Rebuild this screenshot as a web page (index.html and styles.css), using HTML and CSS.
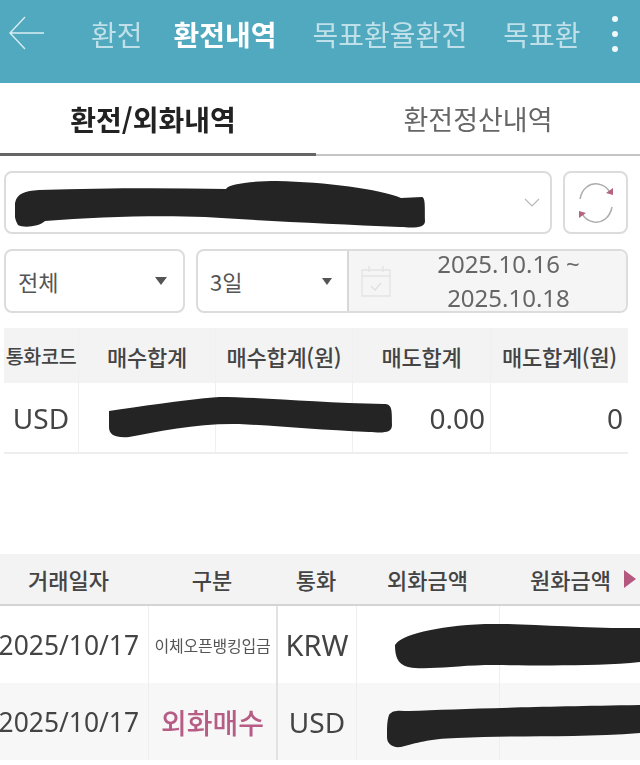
FILE: index.html
```html
<!DOCTYPE html>
<html lang="ko">
<head>
    <meta charset="UTF-8">
    <link rel="stylesheet" href="styles.css">
</head>
<body>
<div class="page">
    <!-- 상단 메뉴 -->
    <div class="topbar">
        <svg class="back" width="38" height="34" viewBox="0 0 38 34"><path d="M17 1 L2 17 L17 33 M2 17 H36" fill="none" stroke="#d8edf2" stroke-width="1.4"/></svg>
        <div class="menu">
            <span class="m1">환전</span>
            <span class="m2 on">환전내역</span>
            <span class="m3">목표환율환전</span>
            <span class="m4">목표환</span>
        </div>
        <div class="dots"><i></i><i></i><i></i></div>
    </div>

    <div class="tabs">
        <div class="tab on">환전/외화내역</div>
        <div class="tab">환전정산내역</div>
    </div>

    <!-- 계좌 선택 -->
    <div class="account">
        <div class="select">
            <svg class="scribble s-account" width="412" height="50" viewBox="0 0 412 50"><path d="M0 22 C2 12 10 10 24 9 C90 7 150 7 211 8 C213 3 236 0 262 0 C310 1 365 8 386 17 L407 16 C410 17 410 22 410 40 C410 47 400 47 385 46 C320 43 250 40 190 36 C140 34 80 36 30 40 C24 46 8 47 3 44 C-1 38 -1 30 0 22 Z" fill="#242424"/></svg>
            <svg class="chev" width="16" height="10" viewBox="0 0 16 10"><path d="M1 1 L8 8 L15 1" fill="none" stroke="#b8b8b8" stroke-width="1.2"/></svg>
        </div>
        <div class="refresh">
            <svg width="38" height="46" viewBox="0 0 38 46">
                <path d="M3 19 C5 8 13 3 21 4 C27 5 31 8 33 13" fill="none" stroke="#adadad" stroke-width="1.5"/>
                <path d="M35 27 C33 38 25 43 17 42 C11 41 7 38 5 33" fill="none" stroke="#adadad" stroke-width="1.5"/>
                <path d="M29 13 L36 15 L36 8 Z" fill="#b5637f"/>
                <path d="M9 33 L2 31 L2 38 Z" fill="#b5637f"/>
            </svg>
        </div>
    </div>

    <!-- 조회 조건 -->
    <div class="filter">
        <div class="kind">전체<b class="tri"></b></div>
        <div class="range">
            <div class="days">3일<b class="tri small"></b></div>
            <div class="dates">
                <svg class="cal" width="30" height="32" viewBox="0 0 30 32"><path d="M1 5 H29 V31 H1 Z M1 11 H29 M8 1 V7 M22 1 V7" fill="none" stroke="#e4e4e4" stroke-width="1.4"/><path d="M10 21 L14 25 L20 18" fill="none" stroke="#e0e0e0" stroke-width="1.4"/></svg>
                <div class="period">2025.10.16 ~<br>2025.10.18</div>
            </div>
        </div>
    </div>

    <!-- 합계 -->
    <div class="sum">
        <div class="sum-row head">
            <span class="code">통화코드</span>
            <span>매수합계</span>
            <span>매수합계(원)</span>
            <span>매도합계</span>
            <span>매도합계(원)</span>
        </div>
        <div class="sum-row body">
            <span class="usd">USD</span>
            <span></span>
            <span></span>
            <span class="num">0.00</span>
            <span class="num">0</span>
            <svg class="scribble s-sum" width="286" height="42" viewBox="0 0 286 42"><path d="M0 14 C30 10 70 3 110 0 C150 0 210 6 275 7 C283 7 283 12 283 28 C283 36 275 36 260 35 C210 33 170 29 130 27 C90 26 50 34 20 40 C6 41 0 38 0 30 Z" fill="#242424"/></svg>
        </div>
    </div>

    <!-- 거래 목록 -->
    <div class="list">
        <div class="list-row head">
            <span class="first">거래일자</span>
            <span>구분</span>
            <span>통화</span>
            <span>외화금액</span>
            <span class="last">원화금액<b class="more"></b></span>
        </div>
        <div class="list-row item">
            <span class="date">2025/10/17</span>
            <span class="type">이체오픈뱅킹입금</span>
            <span class="cur">KRW</span>
            <span></span>
            <span></span>
            <svg class="scribble s-one" width="246" height="46" viewBox="0 0 246 46"><path d="M0 22 C6 12 40 3 90 1 C130 0 190 6 245 5 V39 C200 44 130 42 90 42 C60 43 40 46 20 45 C4 44 0 36 0 22 Z" fill="#242424"/></svg>
        </div>
        <div class="list-row item alt">
            <span class="date">2025/10/17</span>
            <span class="buy">외화매수</span>
            <span class="cur small">USD</span>
            <span></span>
            <span></span>
            <svg class="scribble s-two" width="254" height="44" viewBox="0 0 254 44"><path d="M2 10 C6 4 14 6 22 6 C70 4 130 2 253 0 V28 C190 33 130 30 70 33 C40 34 30 38 14 42 C4 43 0 38 0 32 C0 22 0 16 2 10 Z" fill="#242424"/></svg>
        </div>
    </div>
</div>
</body>
</html>
```

FILE: styles.css
```css
*{box-sizing: border-box;}
html,body,div,span{margin: 0;padding: 0;}
body{
    width: 640px;height: 765px;overflow: hidden;background: #fff;
    font-family: "Noto Sans CJK KR", "Noto Sans", sans-serif;
    color: #444;
}
.page{width: 640px;height: 765px;overflow: hidden;filter: blur(.6px);}

/* 상단 메뉴 */
.topbar{
    height: 83px;background: #50a9bf;
    display: flex;align-items: flex-start;
    padding: 16px 0 0 8px;
}
.back{flex: none;}
.menu{
    display: flex;flex: none;width: 510px;margin-left: 45px;
    font-size: 28px;line-height: 36px;color: #bfe0e8;white-space: nowrap;
}
.menu .on{color: #fff;font-weight: 700;}
.menu .m2{margin-left: 31px;}
.menu .m3{margin-left: 36px;}
.menu .m4{margin-left: 36px;}
.dots{
    flex: none;margin-left: 11px;
    display: flex;flex-direction: column;gap: 9px;
}
.dots i{display: block;width: 6px;height: 6px;border-radius: 50%;background: #f0f8fa;}

.tabs{display: flex;height: 73px;}
.tab{
    flex: 1;text-align: center;font-size: 27px;line-height: 72px;color: #666;
    border-bottom: 2px solid #c4c4c4;
}
.tab.on{
    flex: none;width: 316px;padding-right: 10px;
    font-size: 28px;color: #222;font-weight: 700;border-bottom: 3px solid #666;
}

/* 계좌 선택 */
.account{display: flex;gap: 11px;padding: 15px 12px 0 4px;height: 78px;}
.select,.refresh,.kind,.range{
    border: 2px solid #dcdcdc;border-radius: 8px;background: #fff;
}
.select{flex: 1;position: relative;}
.scribble{position: absolute;}
.s-account{left: 9px;top: 8px;}
.chev{position: absolute;right: 10px;top: 25px;}
.refresh{width: 65px;display: flex;align-items: center;justify-content: center;}

/* 조회 조건 */
.filter{display: flex;gap: 11px;padding: 15px 12px 0 4px;height: 79px;}
.kind,.days{
    display: flex;align-items: center;justify-content: space-between;
    font-size: 22px;color: #555;
}
.kind{width: 181px;padding: 0 16px 0 12px;}
.range{flex: 1;display: flex;}
.days{width: 149px;padding: 0 15px 0 12px;}
.tri{
    width: 0;height: 0;
    border-left: 6px solid transparent;border-right: 6px solid transparent;border-top: 8px solid #555;
}
.tri.small{border-left-width: 5px;border-right-width: 5px;border-top-width: 7px;}
.dates{
    flex: 1;display: flex;align-items: center;
    background: #f5f5f5;border-left: 2px solid #d8d8d8;padding-left: 12px;
    border-radius: 0 6px 6px 0;
}
.cal{flex: none;}
.period{
    flex: 1;text-align: center;font-size: 24px;line-height: 34px;color: #666;
    font-family: "Noto Sans", sans-serif;white-space: nowrap;
}

/* 합계 */
.sum{margin: 15px 12px 0 4px;height: 126px;}
.sum-row{display: grid;grid-template-columns: 74px 137px 137px 138px 138px;position: relative;}
.sum-row.head{height: 55px;background: #f3f3f3;}
.sum-row.body{height: 71px;border-bottom: 2px solid #eee;}
.sum-row span{display: flex;align-items: center;justify-content: center;border-left: 1px solid #f0f0f0;}
.sum-row span:first-child{border-left: 0;}
.sum-row.head span{font-size: 22px;font-weight: 500;color: #444;white-space: nowrap;letter-spacing: -.3px;}
.sum-row.head .code{font-size: 19.5px;}
.sum-row .usd{font-size: 28px;color: #444;font-family: "Noto Sans", sans-serif;}
.sum-row .num{
    justify-content: flex-end;padding-right: 5px;
    font-size: 28px;color: #444;font-family: "Noto Sans", sans-serif;
}
.s-sum{left: 105px;top: 14px;}

/* 거래 목록 */
.list{margin-top: 100px;}
.list-row{display: grid;grid-template-columns: 148px 128px 80px 143px 141px;position: relative;}
.list-row.head{height: 52px;background: #f3f3f3;border-bottom: 2px solid #d4d4d4;}
.list-row.head span{
    display: flex;align-items: center;justify-content: center;
    font-size: 22px;font-weight: 500;color: #444;white-space: nowrap;
}
.list-row.head .first{padding-right: 11px;}
.list-row.head .last{justify-content: flex-end;padding-right: 4px;}
.more{
    width: 0;height: 0;margin-left: 13px;
    border-top: 9px solid transparent;border-bottom: 9px solid transparent;border-left: 12px solid #b5587f;
}
.list-row.item{height: 77px;}
.list-row.alt{background: #f7f7f7;}
.list-row.item span{
    display: flex;align-items: center;justify-content: center;white-space: nowrap;
    border-left: 1px solid #eee;
}
.list-row.item span:first-child{border-left: 0;}
.list-row.item span:nth-child(3){border-left: 2px solid #e2e2e2;}
.list-row.item .date{
    justify-content: flex-end;padding-right: 9px;
    font-size: 26.4px;color: #444;font-family: "Noto Sans", sans-serif;
}
.type{font-size: 16px;color: #555;letter-spacing: -.25px;}
.buy{font-size: 28px;font-weight: 500;color: #b75c85;}
.cur{font-size: 29px;color: #444;font-family: "Noto Sans", sans-serif;}
.cur.small{font-size: 28px;}
.s-one{left: 395px;top: 17px;}
.s-two{left: 387px;top: 22px;}
```
